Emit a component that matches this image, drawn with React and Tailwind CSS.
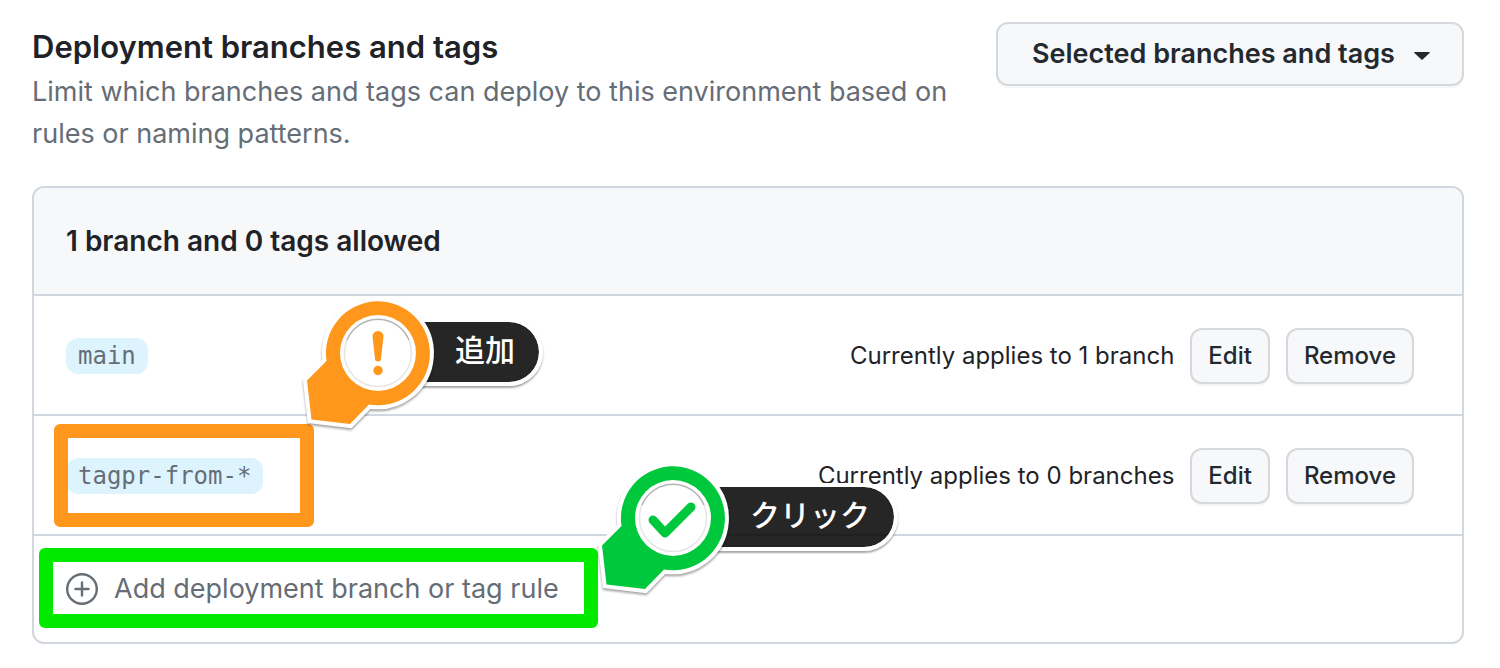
const branchRules = [
  { pattern: "main", summary: "Currently applies to 1 branch" },
  { pattern: "tagpr-from-*", summary: "Currently applies to 0 branches" },
];

function SmallButton({ children, label }) {
  return (
    <button
      type="button"
      aria-label={label}
      className="h-14 rounded-xl border-2 border-[#d5d8dc] bg-[#f6f8fa] px-4 text-2xl font-medium text-[#24292f] shadow-[0_2px_0_rgba(31,35,40,0.04)]"
    >
      {children}
    </button>
  );
}

function RuleRow({ pattern, summary }) {
  return (
    <li className="flex min-h-30 items-center gap-4 border-b-2 border-[#d0d7de] pt-[2px] pr-12 pl-8">
      <code className="rounded-xl bg-[#ddf4ff] px-3 font-['DejaVu_Sans_Mono',monospace] text-2xl leading-9 text-[#656d76]">
        {pattern}
      </code>
      <span className="ml-auto text-2xl">{summary}</span>
      <SmallButton label={`Edit ${pattern}`}>Edit</SmallButton>
      <SmallButton label={`Remove ${pattern}`}>Remove</SmallButton>
    </li>
  );
}

const pinPath =
  "M-51.5 8 L-71 27.500 L-66.500 66.500 L-28 71 L-9 51.500 A52 52 0 1 0 -51.500 8 Z";

function Callout({ className, text, label, children }) {
  return (
    <div className={`pointer-events-none absolute flex h-35 items-start ${className}`}>
      <div className="mt-[25px] ml-20 box-content flex h-[52px] items-center rounded-r-full border-4 border-white bg-black/85 bg-clip-padding pr-6 pb-2 pl-[73px] font-['Noto_Sans_CJK_JP',sans-serif] text-[30px] leading-none font-medium whitespace-nowrap text-white shadow-[0_2px_2px_rgba(0,0,0,0.35)]">
        {text}
      </div>
      <svg
        viewBox="-80 -60 140 140"
        role="img"
        aria-label={label}
        className="absolute top-0 left-0 h-35 w-35 overflow-visible"
      >
        <g className="drop-shadow-[0_2px_1px_rgba(0,0,0,0.35)]">
          <path d={pinPath} fill="white" stroke="white" strokeWidth="8" />
        </g>
        <path d={pinPath} fill="currentColor" />
        <circle r="38" fill="white" />
        <circle r="33.500" fill="none" stroke="#000" strokeOpacity="0.1" strokeWidth="1.500" />
        <path
          d="M-31 -13 A33.500 33.500 0 0 1 31 -13"
          fill="none"
          stroke="#000"
          strokeOpacity="0.22"
          strokeWidth="1.500"
        />
        {children}
      </svg>
    </div>
  );
}

export default function App() {
  return (
    <main className="bg-white pt-5 pr-9 pb-6 pl-8 font-['Inter',sans-serif] text-[#1f2328]">
      <header className="flex items-start justify-between gap-10">
        <div>
          <h1 className="pt-1 text-[31px] leading-[46px] font-semibold">
            Deployment branches and tags
          </h1>
          <p className="max-w-[940px] pt-px text-[27px] leading-[42px] text-[#656d76]">
            Limit which branches and tags can deploy to this environment based on rules or naming
            patterns.
          </p>
        </div>
        <div className="relative mt-[2px] shrink-0">
          <select
            aria-label="Deployment branch policy"
            className="h-16 appearance-none rounded-xl border-2 border-[#d5d8dc] bg-[#f6f8fa] pr-[67px] pl-[34px] text-[27px] font-semibold text-[#24292f] shadow-[0_2px_0_rgba(31,35,40,0.04)]"
          >
            <option>Selected branches and tags</option>
          </select>
          <svg
            viewBox="0 0 16 8"
            aria-hidden="true"
            className="pointer-events-none absolute top-[30px] right-[34px] h-2 w-4 fill-[#24292f]"
          >
            <path d="M.9 0h14.200c.8 0 1 .5.500 1L8.600 7.600a.9.900 0 0 1-1.200 0L.4 1C-.1.500.1 0 .9 0Z" />
          </svg>
        </div>
      </header>

      <section className="relative mt-[31px] rounded-xl border-2 border-[#d0d7de]">
        <h2 className="rounded-t-[10px] border-b-2 border-[#d0d7de] bg-[#f6f8fa] px-8 py-8 text-[28px] leading-[42px] font-semibold">
          1 branch and 0 tags allowed
        </h2>
        <ul>
          {branchRules.map((rule) => (
            <RuleRow key={rule.pattern} {...rule} />
          ))}
        </ul>
        <div className="px-8 pt-8 pb-8">
          <button
            type="button"
            className="flex items-center gap-4 text-[27px] leading-[42px] text-[#656d76]"
          >
            <svg viewBox="0 0 16 16" aria-hidden="true" className="h-8 w-8 fill-current">
              <path d="M8 0a8 8 0 1 1 0 16A8 8 0 0 1 8 0ZM1.200 8a6.800 6.800 0 1 0 13.600 0 6.800 6.800 0 0 0-13.600 0Zm7.400-3.250v2.650h2.650a.6.600 0 0 1 0 1.200h-2.650v2.650a.6.600 0 0 1-1.200 0v-2.650h-2.650a.6.600 0 0 1 0-1.200h2.650v-2.650a.6.600 0 0 1 1.200 0Z" />
            </svg>
            Add deployment branch or tag rule
          </button>
        </div>

        <div className="pointer-events-none absolute top-[236px] left-5 h-[103px] w-[260px] rounded-md border-14 border-[#ff971c]" />
        <div className="pointer-events-none absolute top-[360px] left-[5px] h-20 w-[559px] rounded-md border-14 border-[#00ea00]" />

        <Callout
          className="top-[105px] left-[264px] text-[#ff971c]"
          text="追加"
          label="Attention"
        >
          <path
            d="M-5.500 -16.500 A5.500 5.500 0 0 1 5.500 -16.500 L3 5.500 A3 3 0 0 1 -3 5.500 Z"
            fill="currentColor"
          />
          <circle cy="17.500" r="4.700" fill="currentColor" />
        </Callout>
        <Callout
          className="top-[270px] left-[559px] text-[#00c83c]"
          text="クリック"
          label="Done"
        >
          <path
            d="M-20 2 L-8 15 L18 -11"
            fill="none"
            stroke="currentColor"
            strokeWidth="9"
            strokeLinecap="round"
            strokeLinejoin="round"
          />
        </Callout>
      </section>
    </main>
  );
}
